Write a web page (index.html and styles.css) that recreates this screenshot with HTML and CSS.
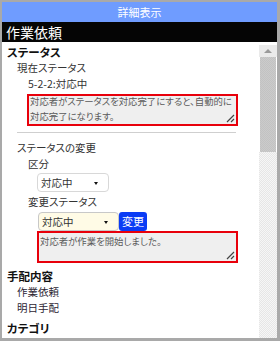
FILE: index.html
```html
<!DOCTYPE html>
<html lang="ja">
<head>
    <meta charset="UTF-8">
    <meta name="viewport" content="width=device-width, initial-scale=1.0">
    <title>詳細表示</title>
    <link rel="stylesheet" href="styles.css">
</head>
<body>
    <div class="frame">
        <div class="title">詳細表示</div>
        <div class="header">作業依頼</div>

        <div class="body">
            <div class="content">
                <!-- ステータス -->
                <h3 class="heading first">ステータス</h3>
                <p class="lv1">現在ステータス</p>
                <p class="lv2">5-2-2:対応中</p>
                <div class="note note-current">
                    <div class="note-text shift">対応者がステータスを対応完了にすると、自動的に<br>対応完了になります。</div>
                    <svg class="grip" width="9" height="9" viewBox="0 0 9 9"><path d="M1 8 L8 1 M5 8 L8 5" stroke="#444" stroke-width="1.2"/></svg>
                </div>
                <div class="rule"></div>

                <p class="lv1 change-title">ステータスの変更</p>
                <p class="lv2">区分</p>
                <div class="pick pick-kind">対応中<span class="caret"></span></div>
                <p class="lv2 after-pick">変更ステータス</p>
                <div class="pick-row">
                    <div class="pick pick-new">対応中<span class="caret"></span></div>
                    <button class="btn">変更</button>
                </div>
                <div class="note note-new">
                    <div class="note-text">対応者が作業を開始しました。</div>
                    <svg class="grip" width="9" height="9" viewBox="0 0 9 9"><path d="M1 8 L8 1 M5 8 L8 5" stroke="#444" stroke-width="1.2"/></svg>
                </div>

                <!-- 手配内容 -->
                <h3 class="heading arrange">手配内容</h3>
                <p class="lv1 item">作業依頼</p>
                <p class="lv1 item">明日手配</p>

                <h3 class="heading category">カテゴリ</h3>
            </div>

            <div class="scrollbar">
                <div class="sb-up"><span class="sb-arrow"></span></div>
                <div class="sb-thumb"></div>
                <div class="sb-track"></div>
            </div>
        </div>
    </div>
</body>
</html>
```

FILE: styles.css
```css
* {
    box-sizing: border-box;
}

body {
    margin: 0;
    font-family: "Noto Sans CJK JP", "Liberation Sans", sans-serif;
    font-feature-settings: "palt";
    background: #fff;
}

.frame {
    width: 280px;
    height: 341px;
    border: 2px solid #a9a9a9;
    border-right-width: 3px;
    border-bottom-width: 3px;
    display: flex;
    flex-direction: column;
}

.title {
    height: 20px;
    line-height: 20px;
    background: #6f9cff;
    color: #fff;
    font-size: 11px;
    text-align: center;
}

.header {
    height: 20px;
    line-height: 20px;
    background: #050505;
    color: #fff;
    font-size: 14px;
    padding-left: 4px;
}

.body {
    flex: 1;
    display: flex;
    min-height: 0;
}

.content {
    flex: 1;
    padding: 0 0 0 5px;
    overflow: hidden;
    color: #222;
}

.heading {
    margin: 0;
    font-size: 11.5px;
    font-weight: bold;
    line-height: 15px;
    color: #111;
}

.heading.first {
    margin-top: 3px;
}

.lv1, .lv2 {
    margin: 0;
    font-size: 10.5px;
    line-height: 16px;
    color: #333;
}

.lv1 {
    padding-left: 10px;
}

.lv2 {
    padding-left: 21px;
}

.note {
    position: relative;
    height: 32px;
    border: 2px solid #e8000b;
    background: #efefef;
    font-size: 9.4px;
    color: #5a5a5a;
    overflow: hidden;
}

.note-text {
    line-height: 15px;
    padding: 0 1px;
    white-space: nowrap;
}

.note-text.shift {
    margin-top: -2px;
}

.note-current {
    margin: 2px 21px 0 20px;
}

.note-new {
    margin: 0 21px 0 30px;
}

.note-new .note-text {
    padding-top: 1px;
}

.grip {
    position: absolute;
    right: 1px;
    bottom: 1px;
}

.rule {
    height: 1px;
    background: #cfcfcf;
    margin: 6px 23px 0 10px;
}

.change-title {
    margin-top: 7px;
}

.pick {
    position: relative;
    height: 19px;
    line-height: 18px;
    border: 1px solid #d8d8d8;
    border-radius: 4px;
    background: #fff;
    font-size: 10.5px;
    color: #333;
    padding-left: 3px;
}

.pick-kind {
    width: 72px;
    margin: 1px 0 0 30px;
}

.after-pick {
    margin-top: 2px;
}

.pick-row {
    display: flex;
    margin: 2px 0 0 31px;
}

.pick-new {
    width: 81px;
    background: #fffbe6;
    border-color: #c8c8c8;
}

.caret {
    position: absolute;
    right: 10px;
    top: 8px;
    border-left: 2.5px solid transparent;
    border-right: 2.5px solid transparent;
    border-top: 3px solid #111;
}

.btn {
    height: 19px;
    width: 28px;
    padding: 0;
    border: none;
    border-radius: 3px;
    background: #0a3cf5;
    color: #fff;
    font-family: inherit;
    font-size: 11px;
    line-height: 19px;
}

.arrange {
    margin-top: 6px;
}

.item {
    color: #2d2633;
}

.category {
    margin-top: 5px;
}

.scrollbar {
    width: 18px;
    margin-top: 3px;
    display: flex;
    flex-direction: column;
}

.sb-up {
    height: 12px;
    background: #eaeaea;
    display: flex;
    align-items: center;
    justify-content: center;
}

.sb-arrow {
    border-left: 4px solid transparent;
    border-right: 4px solid transparent;
    border-bottom: 4px solid #9a9a9a;
}

.sb-thumb {
    height: 95px;
    margin: 0 1px;
    background: repeating-conic-gradient(#c2c2c2 0 25%, #cbcbcb 0 50%) 0 0 / 2px 2px;
}

.sb-track {
    flex: 1;
    background: repeating-conic-gradient(#f6f6f6 0 25%, #e6e6e6 0 50%) 0 0 / 2px 2px;
}
```
